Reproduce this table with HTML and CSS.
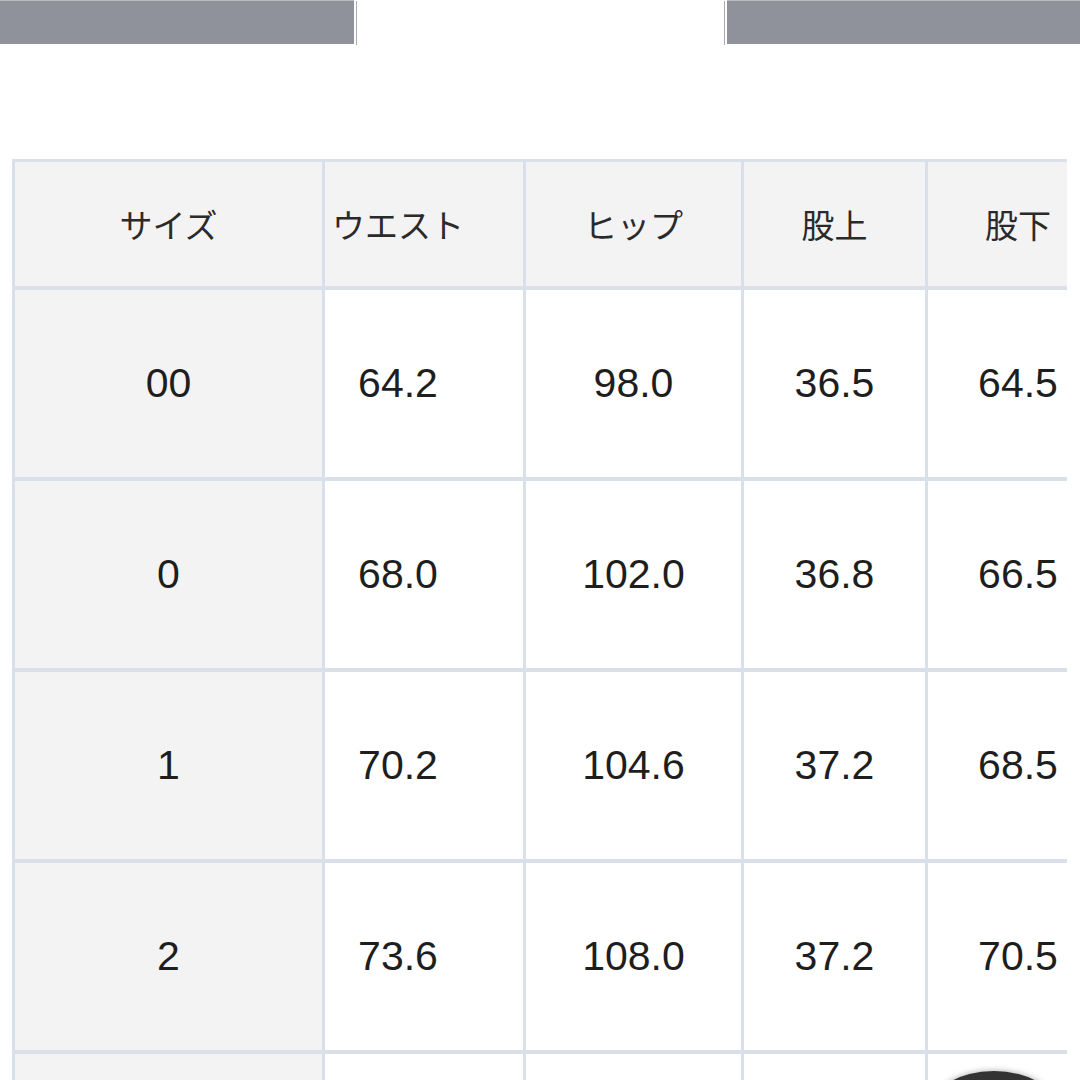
FILE: index.html
```html
<!DOCTYPE html>
<html lang="ja">
<head>
<meta charset="utf-8">
<title>サイズ表</title>
<link rel="stylesheet" href="styles.css">
</head>
<body>
<div class="topbars">
  <div class="tab tab-left"></div>
  <div class="tab tab-right"></div>
</div>
<div class="table-wrap">
  <div class="size-table">
    <div class="cell head">サイズ</div>
    <div class="cell head c2">ウエスト</div>
    <div class="cell head">ヒップ</div>
    <div class="cell head">股上</div>
    <div class="cell head">股下</div>

    <div class="cell first num">00</div>
    <div class="cell num c2">64.2</div>
    <div class="cell num">98.0</div>
    <div class="cell num">36.5</div>
    <div class="cell num">64.5</div>

    <div class="cell first num">0</div>
    <div class="cell num c2">68.0</div>
    <div class="cell num">102.0</div>
    <div class="cell num">36.8</div>
    <div class="cell num">66.5</div>

    <div class="cell first num">1</div>
    <div class="cell num c2">70.2</div>
    <div class="cell num">104.6</div>
    <div class="cell num">37.2</div>
    <div class="cell num">68.5</div>

    <div class="cell first num">2</div>
    <div class="cell num c2">73.6</div>
    <div class="cell num">108.0</div>
    <div class="cell num">37.2</div>
    <div class="cell num">70.5</div>

    <div class="cell first num"></div>
    <div class="cell num c2"></div>
    <div class="cell num"></div>
    <div class="cell num"></div>
    <div class="cell num"></div>
  </div>
</div>
<div class="fab"></div>
</body>
</html>
```

FILE: styles.css
```css
html, body {
  margin: 0;
  padding: 0;
  background: #ffffff;
  width: 1080px;
  height: 1080px;
  overflow: hidden;
  position: relative;
}

.topbars {
  display: flex;
  justify-content: space-between;
  height: 44px;
}

.tab {
  height: 43px;
  background: #8f929a;
  border-top: 1px solid #b9bbc0;
}

.tab-left {
  width: 354px;
  box-shadow: 2px 1px 0 #ffffff, 3px 1px 0 #a9abb0;
}

.tab-right {
  width: 353px;
  box-shadow: -2px 1px 0 #ffffff, -3px 1px 0 #a9abb0;
}

.table-wrap {
  margin: 115px 0 0 12px;
  width: 1055px;
  overflow: hidden;
}

.size-table {
  display: grid;
  grid-template-columns: 307px 198px 215px 181px 180px;
  grid-template-rows: 124px repeat(5, 187px);
  column-gap: 3px;
  row-gap: 4px;
  padding: 3px 0 0 3px;
  background: #dae0e9;
  width: max-content;
}

.cell {
  background: #ffffff;
  display: flex;
  align-items: center;
  justify-content: center;
  color: #1e1e1e;
}

.head {
  background: #f3f3f3;
  font-family: "Noto Sans CJK JP", "Noto Sans", sans-serif;
  font-size: 33px;
  color: #2a2a2a;
}

.first {
  background: #f3f3f3;
}

.num {
  font-family: "Liberation Sans", Arial, sans-serif;
  font-size: 41px;
}

.c2 {
  padding-right: 52px;
}

.fab {
  position: absolute;
  left: 930px;
  top: 1071px;
  width: 128px;
  height: 80px;
  border-radius: 50%;
  background: #333333;
  box-shadow: 0 0 6px rgba(0, 0, 0, 0.35);
}
```
